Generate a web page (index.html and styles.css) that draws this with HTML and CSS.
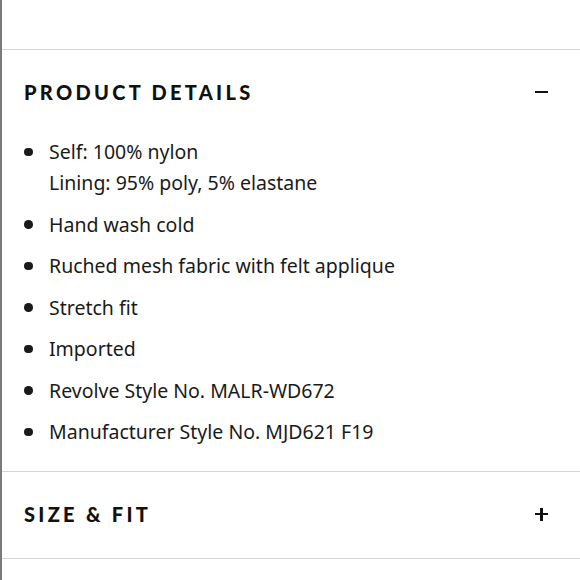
FILE: index.html
```html
<!DOCTYPE html>
<html>
<head>
<meta charset="utf-8">
<link rel="stylesheet" href="styles.css">
</head>
<body>
<div class="page">
  <div class="top"></div>
  <section class="section open">
    <div class="header">
      <h2 class="title">PRODUCT DETAILS</h2>
      <span class="icon minus"></span>
    </div>
    <ul class="list">
      <li class="item"><span class="dot"></span><span class="txt">Self: 100% nylon<br>Lining: 95% poly, 5% elastane</span></li>
      <li class="item"><span class="dot"></span><span class="txt">Hand wash cold</span></li>
      <li class="item"><span class="dot"></span><span class="txt">Ruched mesh fabric with felt applique</span></li>
      <li class="item"><span class="dot"></span><span class="txt">Stretch fit</span></li>
      <li class="item"><span class="dot"></span><span class="txt">Imported</span></li>
      <li class="item"><span class="dot"></span><span class="txt">Revolve Style No. MALR-WD672</span></li>
      <li class="item"><span class="dot"></span><span class="txt">Manufacturer Style No. MJD621 F19</span></li>
    </ul>
  </section>
  <section class="section">
    <div class="header">
      <h2 class="title">SIZE &amp; FIT</h2>
      <span class="icon plus"></span>
    </div>
  </section>
  <div class="rest"></div>
</div>
</body>
</html>
```
FILE: styles.css
```css
html, body { margin: 0; padding: 0; background: #fff; }
.page {
  width: 580px;
  height: 580px;
  border-left: 2px solid #7b7b7b;
  box-sizing: border-box;
  overflow: hidden;
}
.top { height: 49px; }
.section { border-top: 1px solid #d4d4d4; }
.rest { border-top: 1px solid #d4d4d4; height: 30px; }
.header {
  height: 86px;
  box-sizing: border-box;
  padding: 0 32px 2px 22px;
  display: flex;
  align-items: center;
  justify-content: space-between;
}
.title {
  margin: 0;
  font-family: "Lato", "Liberation Sans", sans-serif;
  font-weight: 900;
  font-size: 20px;
  letter-spacing: 3.3px;
  color: #111;
}
.icon { position: relative; width: 13px; height: 13px; display: block; }
.icon::before {
  content: "";
  position: absolute;
  left: 0; top: 5.25px;
  width: 13px; height: 2.5px;
  background: #111;
}
.plus::after {
  content: "";
  position: absolute;
  left: 5.25px; top: 0;
  width: 2.5px; height: 13px;
  background: #111;
}
.list {
  list-style: none;
  margin: 0;
  padding: 0 0 24px 0;
  font-family: "Noto Sans", sans-serif;
  font-size: 19.5px;
  line-height: 31px;
  color: #1a1a1a;
}
.item {
  display: grid;
  grid-template-columns: 47px 1fr;
  margin-bottom: 10.5px;
}
.item:last-child { margin-bottom: 0; }
.dot {
  width: 8.5px; height: 8.5px;
  border-radius: 50%;
  background: #1a1a1a;
  margin: 11.5px 0 0 22px;
}
```
